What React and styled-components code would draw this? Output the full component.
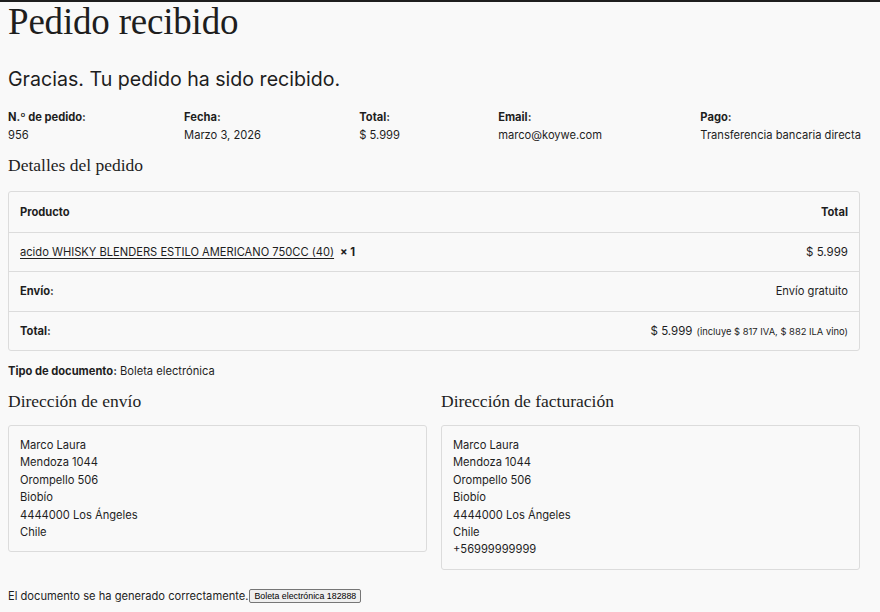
import React from "react";
import styled, { createGlobalStyle } from "styled-components";

const Global = createGlobalStyle`
  *, *::before, *::after { box-sizing: border-box; }
  html, body { margin: 0; padding: 0; background: #f9f9f9; }
  body {
    border-top: 2px solid #1e1e1e;
    font-family: Inter, "Noto Sans", sans-serif;
    color: #1e1e1e;
    font-size: 11.15px;
  }
`;

const Page = styled.main`
  width: 869px;
  padding: 0 8px;
`;

const Title = styled.h1`
  font-family: "Liberation Serif", "DejaVu Serif", serif;
  font-weight: 400;
  font-size: 37px;
  line-height: 40px;
  margin: 0;
  letter-spacing: -0.2px;
`;

const Notice = styled.p`
  font-size: 19.6px;
  line-height: 24px;
  margin: 25px 0 20px;
`;

const Overview = styled.ul`
  list-style: none;
  margin: 0;
  padding: 0;
  display: flex;
  justify-content: space-between;
`;

const OverviewItem = styled.li`
  display: flex;
  flex-direction: column;
  gap: 5px;
  line-height: 13px;
  strong { font-weight: 700; }
`;

const SectionTitle = styled.h2`
  font-family: "Liberation Serif", "DejaVu Serif", serif;
  font-weight: 400;
  font-size: 17.5px;
  line-height: 22px;
  margin: ${(p) => p.$m || "12px 0 15px"};
`;

const Table = styled.div`
  border: 1px solid #dcdcdc;
  border-radius: 3px;
  width: 852px;
`;

const Row = styled.div`
  display: flex;
  justify-content: space-between;
  align-items: center;
  height: 39.5px;
  padding: 0 11px;
  & + & { border-top: 1px solid #dcdcdc; }
`;

const Bold = styled.span`
  font-weight: 700;
`;

const ProductLink = styled.a`
  color: #1e1e1e;
  text-decoration: underline;
  text-underline-offset: 2px;
`;

const Qty = styled.strong`
  font-weight: 700;
  margin-left: 6px;
`;

const Small = styled.small`
  font-size: 9.4px;
  margin-left: 4px;
`;

const Price = styled.span`
  font-size: 11.5px;
`;

const DocType = styled.p`
  margin: 13px 0 0;
  line-height: 14px;
`;

const Columns = styled.div`
  display: grid;
  grid-template-columns: 419px 419px;
  gap: 14px;
  align-items: start;
`;

const Address = styled.address`
  font-style: normal;
  border: 1px solid #dcdcdc;
  border-radius: 3px;
  padding: 11px 11px 10px;
  line-height: 17.4px;
`;

const Footer = styled.p`
  margin: 19px 0 0;
  display: flex;
  align-items: center;
`;

const DocButton = styled.button`
  font-family: "Liberation Sans", Arial, sans-serif;
  font-size: 8.8px;
  color: #000;
  background: #efefef;
  border: 1px solid #767676;
  border-radius: 2px;
  padding: 1px 4px;
  margin-left: 1px;
  line-height: 10px;
`;

const addr = ["Marco Laura", "Mendoza 1044", "Orompello 506", "Biobío", "4444000 Los Ángeles", "Chile"];

export default function App() {
  return (
    <>
      <Global />
      <Page>
        <Title>Pedido recibido</Title>
        <Notice>Gracias. Tu pedido ha sido recibido.</Notice>
        <Overview>
          <OverviewItem><strong>N.º de pedido:</strong><span>956</span></OverviewItem>
          <OverviewItem><strong>Fecha:</strong><span>Marzo 3, 2026</span></OverviewItem>
          <OverviewItem><strong>Total:</strong><span>$ 5.999</span></OverviewItem>
          <OverviewItem><strong>Email:</strong><span>marco@koywe.com</span></OverviewItem>
          <OverviewItem><strong>Pago:</strong><span>Transferencia bancaria directa</span></OverviewItem>
        </Overview>
        <SectionTitle>Detalles del pedido</SectionTitle>
        <Table>
          <Row><Bold>Producto</Bold><Bold>Total</Bold></Row>
          <Row>
            <span>
              <ProductLink href="#">acido WHISKY BLENDERS ESTILO AMERICANO 750CC (40)</ProductLink>
              <Qty>× 1</Qty>
            </span>
            <Price>$ 5.999</Price>
          </Row>
          <Row><Bold>Envío:</Bold><span>Envío gratuito</span></Row>
          <Row>
            <Bold>Total:</Bold>
            <span><Price>$ 5.999</Price><Small>(incluye $ 817 IVA, $ 882 ILA vino)</Small></span>
          </Row>
        </Table>
        <DocType><Bold>Tipo de documento:</Bold> Boleta electrónica</DocType>
        <Columns>
          <section>
            <SectionTitle $m="12px 0 13px">Dirección de envío</SectionTitle>
            <Address>
              {addr.map((l) => <div key={l}>{l}</div>)}
            </Address>
          </section>
          <section>
            <SectionTitle $m="12px 0 13px">Dirección de facturación</SectionTitle>
            <Address>
              {addr.map((l) => <div key={l}>{l}</div>)}
              <div>+56999999999</div>
            </Address>
          </section>
        </Columns>
        <Footer>
          El documento se ha generado correctamente.
          <DocButton>Boleta electrónica 182888</DocButton>
        </Footer>
      </Page>
    </>
  );
}
